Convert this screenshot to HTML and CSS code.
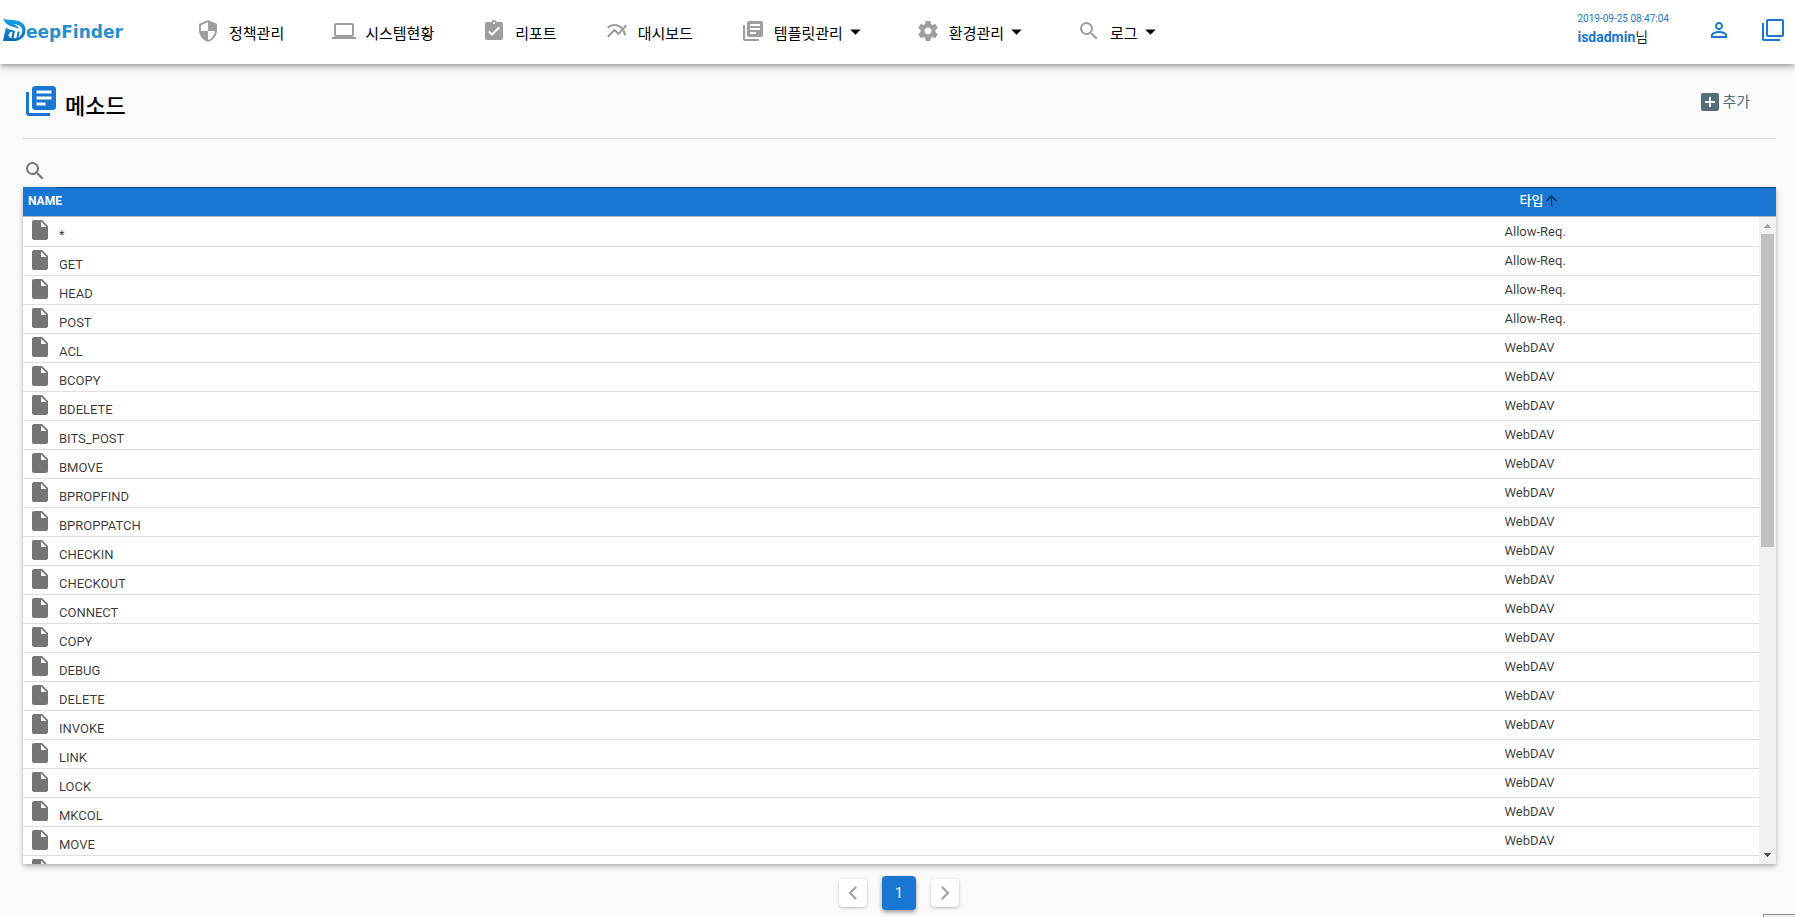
FILE: index.html
```
<!DOCTYPE html>
<html lang="ko">
<head>
<meta charset="utf-8">
<title>DeepFinder</title>
<link rel="stylesheet" href="styles.css">
</head>
<body>
<svg class="sprite" aria-hidden="true">
  <symbol id="i-file" viewBox="0 0 24 24"><path d="M6 2c-1.100 0-2 .9-2 2v16c0 1.100.9 2 2 2h12c1.100 0 2-.9 2-2V8l-6-6H6zm7 7V3.500L18.500 9H13z"/></symbol>
  <symbol id="i-books" viewBox="0 0 24 24"><path d="M4 6H2v14c0 1.100.9 2 2 2h14v-2H4V6zm16-4H8c-1.100 0-2 .9-2 2v12c0 1.100.9 2 2 2h12c1.100 0 2-.9 2-2V4c0-1.100-.9-2-2-2zm-1 9H9V9h10v2zm-4 4H9v-2h6v2zm4-8H9V5h10v2z"/></symbol>
  <symbol id="i-search" viewBox="0 0 24 24"><path d="M15.500 14h-.79l-.28-.27A6.471 6.471 0 0 0 16 9.500 6.500 6.500 0 1 0 9.500 16c1.610 0 3.090-.59 4.230-1.570l.27.28v.79l5 4.990L20.490 19l-4.990-5zm-6 0C7.010 14 5 11.990 5 9.500S7.010 5 9.500 5 14 7.010 14 9.500 11.990 14 9.500 14z"/></symbol>
  <symbol id="i-caret" viewBox="0 0 24 24"><path d="M7 10l5 5 5-5z"/></symbol>
</svg>

<header class="topbar">
  <a class="logo" href="#" aria-label="DeepFinder">
    <svg class="logo-mark" viewBox="0 0 24 24" aria-hidden="true">
      <defs><linearGradient id="lg" x1="0" y1="0" x2="0" y2="1"><stop offset="0" stop-color="#12a5e6"/><stop offset="1" stop-color="#0668b5"/></linearGradient></defs>
      <path fill="url(#lg)" d="M0 0C4 1.800 9 1.200 14 2.200c6 1.200 9.500 4.800 9.500 10C23.500 19 18 23.500 11 23.500H0L3 9.500C6 12 10 12 12.500 13L11 20.500H8.500L10 14.500C8.500 14 7.500 14 6.800 15L5.500 18 8 20.500h6L15 15c.3-1.500 1.500-1.800 2.300-1L16 20c4.500-3 5.500-8 2.500-11.500C17 6.500 13 6 10 5.500 13 7 16 8 16.500 10.500 11 8.500 3 8.500 0 0z"/>
    </svg>
    <span class="logo-text">eepFinder</span>
  </a>
  <nav class="menu">
    <a href="#"><svg class="icon" viewBox="0 0 24 24"><path d="M12 1L3 5v6c0 5.550 3.840 10.740 9 12 5.160-1.260 9-6.450 9-12V5l-9-4zm0 10.990h7c-.53 4.120-3.280 7.790-7 8.940V12H5V6.300l7-3.110v8.800z"/></svg><span>정책관리</span></a>
    <a href="#"><svg class="icon" viewBox="0 0 24 24"><path d="M20 18c1.100 0 1.990-.9 1.990-2L22 6c0-1.100-.9-2-2-2H4c-1.100 0-2 .9-2 2v10c0 1.100.9 2 2 2H0v2h24v-2h-4zM4 6h16v10H4V6z"/></svg><span>시스템현황</span></a>
    <a href="#"><svg class="icon" viewBox="0 0 24 24"><path d="M19 3h-4.180C14.400 1.840 13.300 1 12 1c-1.300 0-2.400.84-2.820 2H5c-1.100 0-2 .9-2 2v14c0 1.100.9 2 2 2h14c1.100 0 2-.9 2-2V5c0-1.100-.9-2-2-2zm-7 0c.55 0 1 .45 1 1s-.45 1-1 1-1-.45-1-1 .45-1 1-1zm-2 14l-4-4 1.410-1.410L10 14.170l6.590-6.590L18 9l-8 8z"/></svg><span>리포트</span></a>
    <a href="#"><svg class="icon" viewBox="0 0 24 24"><path d="M22 6.920l-1.410-1.410-2.850 3.210C15.680 6.400 12.830 5 9.610 5 6.720 5 4.070 6.160 2 8l1.420 1.420C5.120 7.930 7.270 7 9.610 7c2.740 0 5.090 1.260 6.770 3.240l-2.880 3.240-4-4L2 16.990l1.500 1.500 6-6.010 4 4 4.050-4.550c.75 1.350 1.250 2.900 1.440 4.550H21c-.22-2.300-.95-4.390-2.040-6.140L22 6.920z"/></svg><span>대시보드</span></a>
    <a href="#"><svg class="icon"><use href="#i-books"/></svg><span>템플릿관리</span><svg class="caret"><use href="#i-caret"/></svg></a>
    <a href="#"><svg class="icon" viewBox="0 0 24 24"><path d="M19.430 12.980c.04-.32.07-.64.07-.98s-.03-.66-.07-.98l2.110-1.650c.19-.15.24-.42.12-.64l-2-3.460c-.12-.22-.39-.3-.61-.22l-2.490 1c-.52-.4-1.080-.73-1.690-.98l-.38-2.650C14.460 2.180 14.250 2 14 2h-4c-.25 0-.46.18-.49.42l-.38 2.650c-.61.25-1.170.59-1.690.98l-2.490-1c-.23-.09-.49 0-.61.22l-2 3.460c-.13.22-.07.49.12.64l2.110 1.650c-.04.32-.07.65-.07.98s.03.66.07.98l-2.110 1.650c-.19.15-.24.42-.12.64l2 3.460c.12.22.39.3.61.22l2.490-1c.52.4 1.080.73 1.690.98l.38 2.650c.03.24.24.42.49.42h4c.25 0 .46-.18.49-.42l.38-2.650c.61-.25 1.170-.59 1.690-.98l2.490 1c.23.09.49 0 .61-.22l2-3.460c.12-.22.07-.49-.12-.64l-2.110-1.650zM12 15.500c-1.930 0-3.500-1.570-3.500-3.500s1.570-3.500 3.500-3.500 3.500 1.570 3.500 3.500-1.570 3.500-3.500 3.500z"/></svg><span>환경관리</span><svg class="caret"><use href="#i-caret"/></svg></a>
    <a href="#"><svg class="icon"><use href="#i-search"/></svg><span>로그</span><svg class="caret"><use href="#i-caret"/></svg></a>
  </nav>
  <div class="account">
    <div class="user">
      <time datetime="2019-09-25T08:47:04">2019-09-25 08:47:04</time>
      <div><strong>isdadmin</strong>님</div>
    </div>
    <button class="icon-button" aria-label="계정"><svg class="icon" viewBox="0 0 24 24"><path d="M12 5.900a2.100 2.100 0 1 1 0 4.200 2.100 2.100 0 0 1 0-4.200m0 9c2.970 0 6.100 1.460 6.100 2.100v1.100H5.900V17c0-.64 3.130-2.100 6.100-2.100M12 4C9.790 4 8 5.790 8 8s1.790 4 4 4 4-1.790 4-4-1.790-4-4-4zm0 9c-2.670 0-8 1.340-8 4v3h16v-3c0-2.660-5.330-4-8-4z"/></svg></button>
    <button class="icon-button" aria-label="새 창"><svg class="icon" viewBox="0 0 24 24"><path d="M3 5H1v16c0 1.100.9 2 2 2h16v-2H3V5zm18-4H7c-1.100 0-2 .9-2 2v14c0 1.100.9 2 2 2h14c1.100 0 2-.9 2-2V3c0-1.100-.9-2-2-2zm0 16H7V3h14v14z"/></svg></button>
  </div>
</header>

<main class="page">
  <div class="page-head">
    <h1><svg class="title-icon"><use href="#i-books"/></svg><span>메소드</span></h1>
    <button class="add"><svg class="add-icon" viewBox="3 3 18 18"><path d="M19 3H5c-1.110 0-2 .9-2 2v14c0 1.100.89 2 2 2h14c1.100 0 2-.9 2-2V5c0-1.100-.9-2-2-2zm-2 10h-4v4h-2v-4H7v-2h4V7h2v4h4v2z"/></svg><span>추가</span></button>
  </div>
  <label class="search"><svg class="icon"><use href="#i-search"/></svg><input type="text" aria-label="검색"></label>
  <section class="list">
    <table>
      <colgroup><col class="col-name"><col></colgroup>
      <thead><tr><th>NAME</th><th class="type-head"><span>타입<svg class="sort" viewBox="4 4 16 16"><path d="M4 12l1.410 1.410L11 7.830V20h2V7.830l5.580 5.590L20 12l-8-8-8 8z"/></svg></span></th></tr></thead>
      <tbody id="rows"></tbody>
    </table>
    <div class="scrollbar" aria-hidden="true">
      <svg class="arrow arrow-up" viewBox="0 0 7 4"><path d="M3 0h1v1h1v1h1v1h1v1H0V3h1V2h1V1h1z"/></svg>
      <div class="track"><div class="thumb"></div></div>
      <svg class="arrow" viewBox="0 0 7 4"><path d="M0 0h7v1H6v1H5v1H4v1H3V3H2V2H1V1H0z"/></svg>
    </div>
  </section>
  <nav class="pager" aria-label="페이지">
    <button class="step" aria-label="이전"><svg viewBox="0 0 24 24"><path d="M15.410 7.410L14 6l-6 6 6 6 1.410-1.410L10.830 12z"/></svg></button>
    <button class="current">1</button>
    <button class="step" aria-label="다음"><svg viewBox="0 0 24 24"><path d="M10 6L8.590 7.410 13.170 12l-4.580 4.590L10 18l6-6z"/></svg></button>
  </nav>
</main>
<div class="status"></div>
<script src="script.js"></script>
</body>
</html>
```
FILE: styles.css
```
* { box-sizing: border-box; }
body {
  margin: 0;
  height: 100vh;
  display: flex;
  flex-direction: column;
  overflow: hidden;
  background: #fafafa;
  color: rgba(0, 0, 0, .87);
  font: 13px/20px Roboto, "Noto Sans CJK KR", sans-serif;
}
button { border: 0; padding: 0; background: none; font: inherit; cursor: pointer; }
a { color: inherit; text-decoration: none; }
svg { display: block; flex: none; fill: currentColor; }
.sprite { position: absolute; width: 0; height: 0; }
.icon { width: 24px; height: 24px; }

.topbar {
  flex: none;
  height: 64px;
  display: flex;
  align-items: flex-start;
  background: #fff;
  box-shadow: 0 2px 4px -1px rgba(0, 0, 0, .2), 0 4px 5px rgba(0, 0, 0, .14), 0 1px 10px rgba(0, 0, 0, .12);
  position: relative;
}
.logo { display: flex; width: 196px; padding: 18px 0 0 3px; }
.logo-mark { width: 23px; height: 24px; }
.logo-text { font: bold 17px/28px "DejaVu Sans", sans-serif; color: #2591cc; }
.menu { display: flex; flex: 1; gap: 48px; padding-top: 19px; color: #000; font-size: 15px; line-height: 30px; white-space: nowrap; }
.menu a { display: flex; }
.menu .icon { margin-right: 9px; color: #9e9e9e; }
.caret { width: 25px; height: 25px; }
.account { display: flex; align-items: flex-start; color: #1976d2; padding: 0 10px 0 0; }
.user { padding-top: 12px; margin-right: 38px; font-size: 14px; line-height: 25px; color: rgba(0, 0, 0, .87); }
.user time { display: block; font-size: 10px; line-height: 13px; color: #1976d2; }
.user strong { color: #1976d2; }
.icon-button { color: #1976d2; padding-top: 18px; }
.icon-button + .icon-button { margin-left: 30px; }

.page { flex: 1; min-height: 0; display: flex; flex-direction: column; padding: 0 19px 0 23px; }
.page-head { flex: none; height: 75px; display: flex; justify-content: space-between; align-items: flex-start; border-bottom: 1px solid #dbdbdb; }
h1 { display: flex; margin: 0; padding-top: 19px; font-size: 22px; line-height: 48px; font-weight: 500; color: #000; }
.title-icon { width: 36px; height: 36px; margin-right: 6px; color: #1976d2; }
.add { display: flex; gap: 3px; padding: 29px 26px 0 0; color: #546e7a; font-size: 15px; line-height: 18px; }
.add-icon { width: 18px; height: 18px; }
.search { flex: none; display: flex; height: 49px; margin-bottom: -1px; padding-top: 20px; gap: 9px; color: #757575; position: relative; z-index: 1; }
.search input { flex: 1; border: 0; border-bottom: 1px solid #12487d; outline: 0; padding: 0; background: none; font: inherit; }

.list { flex: 1; min-height: 0; overflow: hidden; position: relative; background: #fff; box-shadow: 0 3px 5px rgba(0, 0, 0, .2), 0 1px 5px rgba(0, 0, 0, .12); }
table { width: 100%; table-layout: fixed; border-collapse: separate; border-spacing: 0; }
.col-name { width: 84%; }
th { height: 30px; padding: 0 0 2px 5px; background: #1976d2; border-bottom: 1px solid #b5b5b5; color: #fff; font-size: 12px; text-align: left; }
.type-head { padding-left: 24px; }
.type-head span { display: flex; align-items: center; gap: 3px; font-size: 13px; font-weight: 500; }
.sort { width: 11px; height: 11px; fill: #0b3560; }
td { height: 29px; padding: 0 0 0 9px; border-bottom: 1px solid #dedede; line-height: 18px; color: rgba(0, 0, 0, .78); }
td:first-child { vertical-align: top; }
tbody tr:first-child td { height: 30px; }
.name { display: flex; gap: 7px; height: 28px; padding-top: 1px; line-height: 34px; }
.name .icon { color: #757575; margin-left: -4px; }
.scrollbar { position: absolute; top: 30px; right: 0; bottom: 0; width: 17px; display: flex; flex-direction: column; align-items: center; padding: 7px 0; background: #f1f1f1; }
.arrow { width: 7px; height: 4px; fill: #505050; }
.arrow-up { fill: #a3a3a3; }
.track { flex: 1; width: 13px; padding: 6px 0; }
.thumb { height: 51%; background: #c1c1c1; }

.pager { flex: none; height: 53px; display: flex; justify-content: center; align-items: center; gap: 15px; padding: 5px 1px 0 0; }
.step { width: 28px; height: 28px; border-radius: 4px; background: #fff; color: #a8a8a8; box-shadow: 0 1px 3px rgba(0, 0, 0, .25); }
.step svg { width: 28px; height: 28px; }
.current { width: 34px; height: 34px; border-radius: 4px; background: #1976d2; color: #fff; font-size: 14px; box-shadow: 0 2px 4px rgba(0, 0, 0, .4); }
.status { position: fixed; right: 0; bottom: 0; width: 32px; height: 3px; background: #f2eded; border: 1px solid #909090; border-width: 1px 0 0 1px; }
```
FILE: script.js
```
const methods = ["*", "GET", "HEAD", "POST", "ACL", "BCOPY", "BDELETE", "BITS_POST", "BMOVE", "BPROPFIND", "BPROPPATCH", "CHECKIN", "CHECKOUT", "CONNECT", "COPY", "DEBUG", "DELETE", "INVOKE", "LINK", "LOCK", "MKCOL", "MOVE", ""];
document.getElementById("rows").innerHTML = methods.map((name, i) =>
  `<tr><td><div class="name"><svg class="icon"><use href="#i-file"/></svg><span>${name}</span></div></td><td>${!name ? "" : i < 4 ? "Allow-Req." : "WebDAV"}</td></tr>`
).join("");
```
